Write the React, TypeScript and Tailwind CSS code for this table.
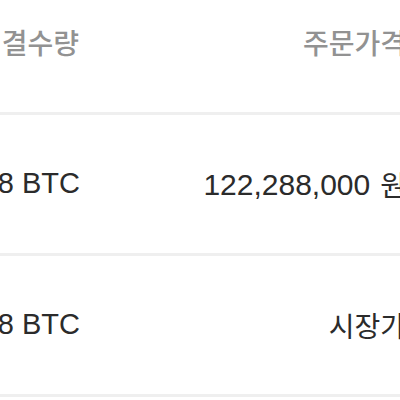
import React from 'react';

const rows = [
  { qty: '0.0008', price: '122,288,000', unit: '원' },
  { qty: '0.0008', price: null, unit: null },
];

const latin = { fontFamily: '"Liberation Sans", "Noto Sans CJK KR", sans-serif' };
const korean = { fontFamily: '"Noto Sans CJK KR", "Liberation Sans", sans-serif' };

export default function App() {
  return (
    <div className="w-[400px] h-[400px] overflow-hidden bg-white">
      <div className="w-[406px] -mt-[28px]">
        <div className="h-[143px] flex items-center border-b-[3px] border-[#efefef] text-[#929292] text-[28px] font-medium whitespace-nowrap" style={korean}>
          <div className="w-[79px] shrink-0 flex justify-end">
            <span>체결수량</span>
          </div>
          <div className="flex-1 flex justify-end">
            <span>주문가격</span>
          </div>
        </div>

        {rows.map((r, i) => (
          <div
            key={i}
            className="h-[141px] flex items-center border-b-[3px] border-[#efefef] text-[#2b2b2b] whitespace-nowrap"
          >
            <div className="w-[80px] shrink-0 flex justify-end text-[29px]" style={latin}>
              <span>{r.qty} BTC</span>
            </div>
            <div className="flex-1 flex justify-end items-center">
              {r.price ? (
                <>
                  <span className="text-[30px]" style={latin}>{r.price}</span>
                  <span className="text-[28px] ml-[10px]" style={korean}>{r.unit}</span>
                </>
              ) : (
                <span className="text-[28px]" style={korean}>시장가</span>
              )}
            </div>
          </div>
        ))}
      </div>
    </div>
  );
}
